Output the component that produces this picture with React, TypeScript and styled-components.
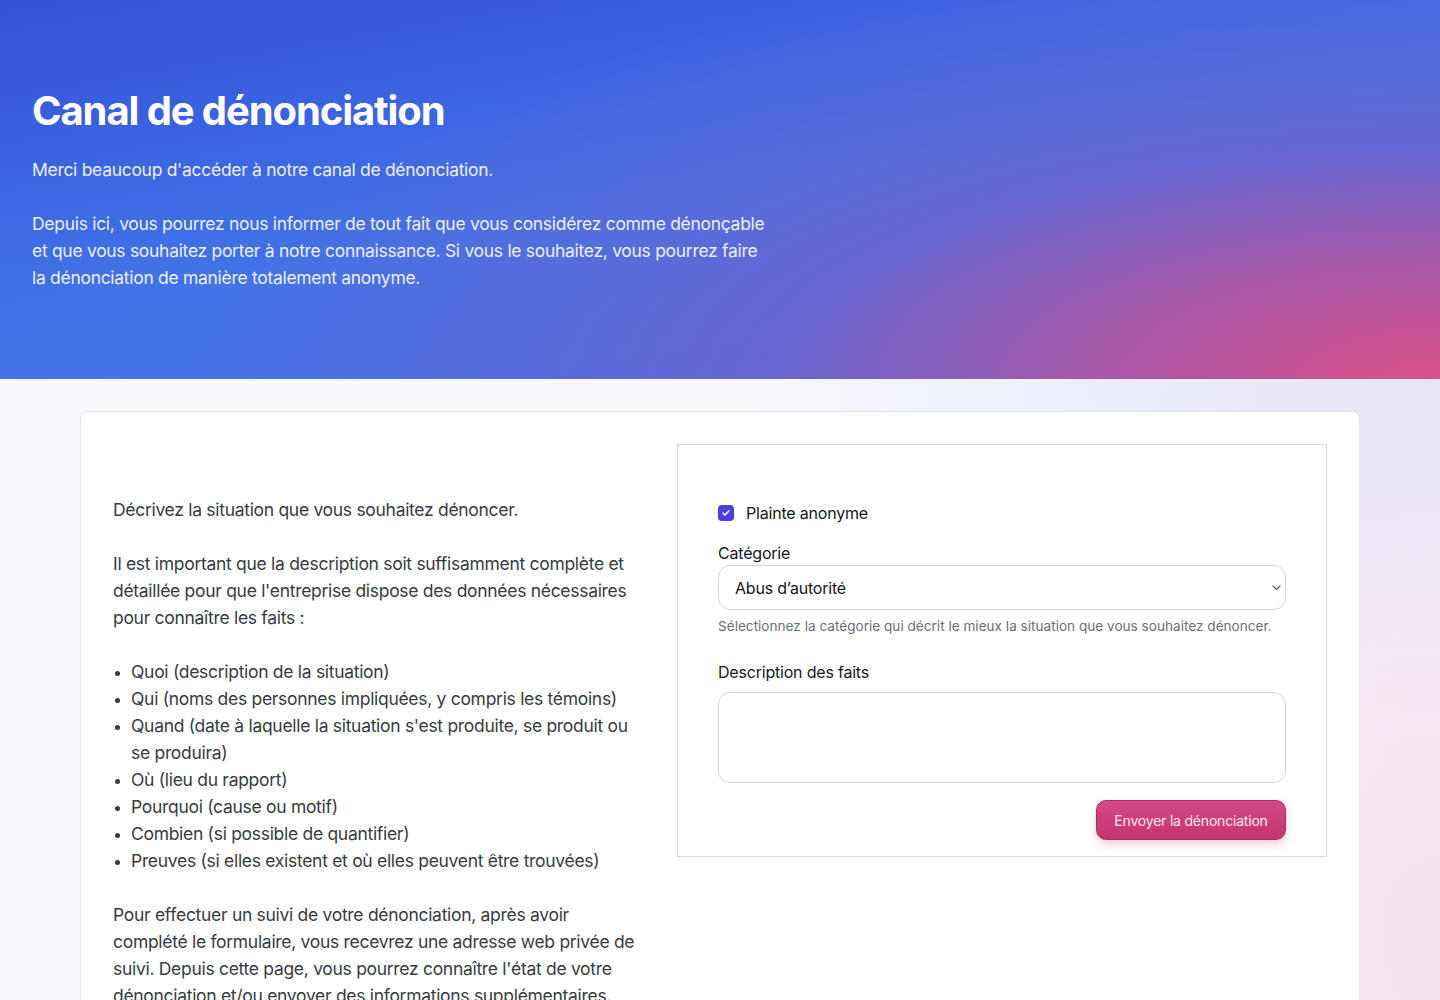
import { createGlobalStyle } from 'styled-components'
import styled from 'styled-components'

const FONT = `Inter, "Noto Sans", "Liberation Sans", sans-serif`

const GlobalStyle = createGlobalStyle`
  * {
    box-sizing: border-box;
  }

  body {
    margin: 0;
    font-family: ${FONT};
    -webkit-font-smoothing: antialiased;
    background-color: #f7f8fd;
  }
`

const BULLETS = [
  'Quoi (description de la situation)',
  'Qui (noms des personnes impliquées, y compris les témoins)',
  "Quand (date à laquelle la situation s'est produite, se produit ou se produira)",
  'Où (lieu du rapport)',
  'Pourquoi (cause ou motif)',
  'Combien (si possible de quantifier)',
  'Preuves (si elles existent et où elles peuvent être trouvées)',
]

const App = () => {
  return (
    <Page>
      <GlobalStyle />
      <Hero>
        <Title>Canal de dénonciation</Title>
        <Intro>
          <HeroText>Merci beaucoup d'accéder à notre canal de dénonciation.</HeroText>
          <HeroText>
            Depuis ici, vous pourrez nous informer de tout fait que vous considérez comme
            dénonçable et que vous souhaitez porter à notre connaissance. Si vous le souhaitez,
            vous pourrez faire la dénonciation de manière totalement anonyme.
          </HeroText>
        </Intro>
      </Hero>
      <Main>
        <Card>
          <Guide>
            <Paragraph>Décrivez la situation que vous souhaitez dénoncer.</Paragraph>
            <Paragraph>
              Il est important que la description soit suffisamment complète et détaillée pour
              que l'entreprise dispose des données nécessaires pour connaître les faits :
            </Paragraph>
            <BulletList>
              {BULLETS.map((item) => (
                <li key={item}>{item}</li>
              ))}
            </BulletList>
            <Paragraph>
              Pour effectuer un suivi de votre dénonciation, après avoir complété le formulaire,
              vous recevrez une adresse web privée de suivi. Depuis cette page, vous pourrez
              connaître l'état de votre dénonciation et/ou envoyer des informations
              supplémentaires.
            </Paragraph>
          </Guide>
          <FormBox onSubmit={(e) => e.preventDefault()}>
            <CheckRow>
              <CheckInput type="checkbox" defaultChecked />
              <CheckBox aria-hidden>
                <svg width="10" height="10" viewBox="0 0 10 10" fill="none">
                  <path
                    d="M2.2 5.2l1.8 1.8 3.8-4"
                    stroke="#fff"
                    strokeWidth="1.6"
                    strokeLinecap="round"
                    strokeLinejoin="round"
                  />
                </svg>
              </CheckBox>
              Plainte anonyme
            </CheckRow>

            <Field $offset={16}>
              <Label htmlFor="category" $gap={0}>
                Catégorie
              </Label>
              <SelectWrap>
                <Select id="category" defaultValue="abus">
                  <option value="abus">Abus d’autorité</option>
                </Select>
                <Chevron width="9" height="6" viewBox="0 0 9 6" fill="none">
                  <path d="M1 1l3.5 3.5L8 1" stroke="#555" strokeWidth="1.1" strokeLinecap="round" />
                </Chevron>
              </SelectWrap>
              <Hint>
                Sélectionnez la catégorie qui décrit le mieux la situation que vous souhaitez
                dénoncer.
              </Hint>
            </Field>

            <Field $offset={24}>
              <Label htmlFor="facts" $gap={8}>
                Description des faits
              </Label>
              <TextArea id="facts" />
            </Field>

            <Actions>
              <SubmitButton type="submit">Envoyer la dénonciation</SubmitButton>
            </Actions>
          </FormBox>
        </Card>
      </Main>
    </Page>
  )
}

const Page = styled.div`
  min-height: 100vh;
  background:
    radial-gradient(ellipse 520px 700px at 100% 85%, rgba(247, 226, 240, 1) 0%, rgba(247, 226, 240, 0) 100%),
    radial-gradient(ellipse 700px 420px at 100% 380px, rgba(226, 230, 248, 1) 0%, rgba(226, 230, 248, 0) 100%),
    #f7f8fd;
`

const Hero = styled.header`
  padding: 87px 32px 88px;
  color: #fff;
  background:
    radial-gradient(
      ellipse 1250px 430px at 100% 100%,
      rgba(218, 80, 138, 1) 0%,
      rgba(172, 86, 163, 0.95) 27%,
      rgba(120, 96, 200, 0.6) 55%,
      rgba(90, 105, 220, 0) 100%
    ),
    linear-gradient(170deg, #3351d8 0%, #4273e8 50%, #4a70e4 100%);
`

const Title = styled.h1`
  margin: 0;
  font-size: 40px;
  line-height: 48px;
  font-weight: 700;
  letter-spacing: -1.1px;
`

const Intro = styled.div`
  max-width: 738px;
  margin-top: 21px;
`

const HeroText = styled.p`
  margin: 0 0 27px;
  font-size: 17.5px;
  line-height: 27px;
  letter-spacing: -0.3px;
  color: rgba(255, 255, 255, 0.93);

  &:last-child {
    margin-bottom: 0;
  }
`

const Main = styled.main`
  padding: 32px 80px;
`

const Card = styled.section`
  display: grid;
  grid-template-columns: 1fr 650px;
  gap: 32px;
  padding: 32px;
  background: #fff;
  border: 1px solid #dfe3ea;
  border-radius: 8px;
`

const Guide = styled.div`
  padding-top: 52px;
  color: #383b42;
  font-size: 17.5px;
  line-height: 27px;
  letter-spacing: -0.3px;
`

const Paragraph = styled.p`
  margin: 0 0 27px;
`

const BulletList = styled.ul`
  margin: 0 0 27px;
  padding-left: 18px;

  li::marker {
    font-size: 14px;
  }
`

const FormBox = styled.form`
  align-self: start;
  display: flex;
  flex-direction: column;
  padding: 56px 40px 16px;
  border: 1px solid #cfdce8;
  color: #15171c;
`

const CheckRow = styled.label`
  position: relative;
  display: flex;
  align-items: center;
  gap: 12px;
  height: 24px;
  font-size: 16px;
  letter-spacing: -0.2px;
  cursor: pointer;
`

const CheckInput = styled.input`
  position: absolute;
  opacity: 0;
  width: 1px;
  height: 1px;
`

const CheckBox = styled.span`
  display: flex;
  align-items: center;
  justify-content: center;
  width: 16px;
  height: 16px;
  border-radius: 4px;
  background: #4a3fe0;
`

const Field = styled.div<{ $offset: number }>`
  display: flex;
  flex-direction: column;
  margin-top: ${({ $offset }) => $offset}px;
`

const Label = styled.label<{ $gap: number }>`
  font-size: 16px;
  line-height: 24px;
  letter-spacing: -0.2px;
  margin-bottom: ${({ $gap }) => $gap}px;
`

const SelectWrap = styled.div`
  position: relative;
`

const Select = styled.select`
  appearance: none;
  width: 100%;
  height: 45px;
  padding: 0 40px 0 16px;
  font-family: ${FONT};
  font-size: 16px;
  letter-spacing: -0.2px;
  color: #15171c;
  background: #fff;
  border: 1px solid #d4d6db;
  border-radius: 12px;
  outline: none;
`

const Chevron = styled.svg`
  position: absolute;
  right: 5px;
  top: 20px;
  pointer-events: none;
`

const Hint = styled.p`
  margin: 6px 0 0;
  font-size: 13.6px;
  line-height: 20px;
  color: #6b6f78;
`

const TextArea = styled.textarea`
  width: 100%;
  height: 91px;
  padding: 12px 16px;
  font-family: ${FONT};
  font-size: 16px;
  border: 1px solid #d4d6db;
  border-radius: 12px;
  resize: none;
  outline: none;
`

const Actions = styled.div`
  display: flex;
  justify-content: flex-end;
  margin-top: 17px;
`

const SubmitButton = styled.button`
  height: 40px;
  width: 190px;
  padding: 0;
  white-space: nowrap;
  font-family: ${FONT};
  font-size: 14px;
  letter-spacing: -0.2px;
  color: #fde8f1;
  background: linear-gradient(180deg, #d54985 0%, #c4356f 100%);
  border: 1px solid #ad2b61;
  border-radius: 10px;
  box-shadow: 0 4px 8px rgba(194, 52, 111, 0.25);
  cursor: pointer;
`

export default App
